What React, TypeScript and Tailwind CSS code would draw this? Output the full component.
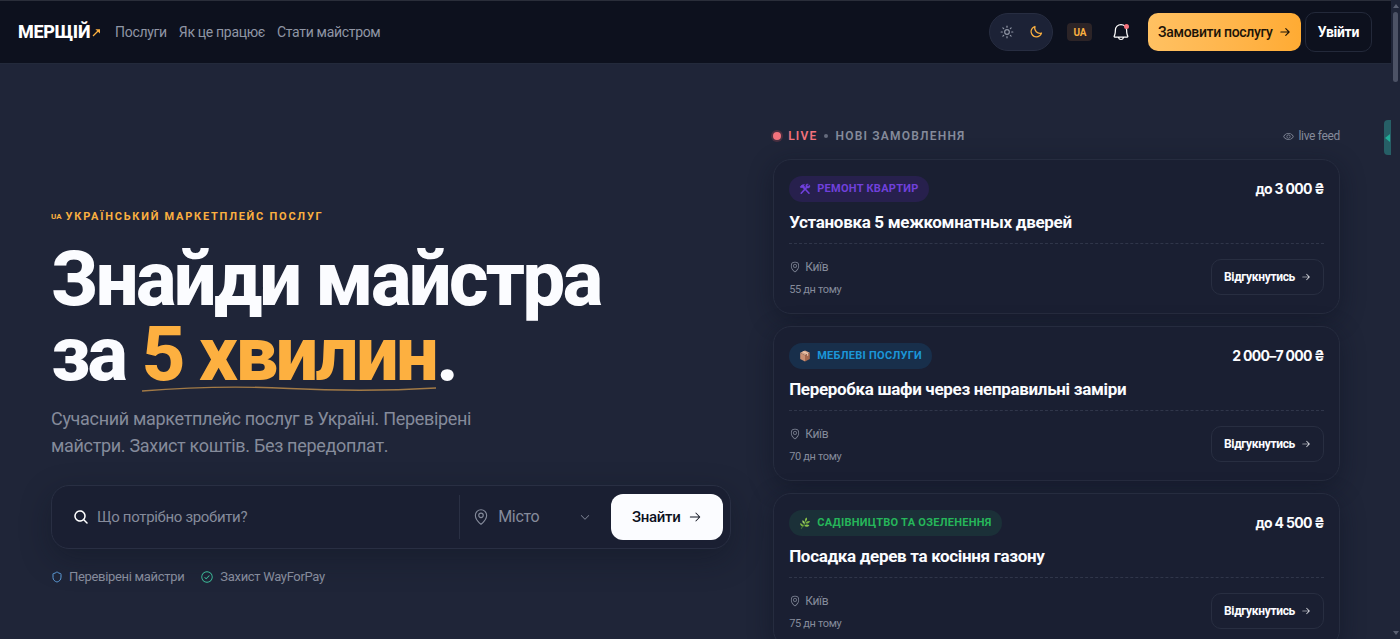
import { useState } from "react";
import type { ReactNode } from "react";
import { Shield, Sun } from "lucide-react";
import {
  PiArrowRight,
  PiArrowRightBold,
  PiBell,
  PiCaretDown,
  PiCheckCircle,
  PiEye,
  PiMagnifyingGlassBold,
  PiMapPin,
  PiMoonBold,
} from "react-icons/pi";

interface Order {
  id: number;
  category: string;
  icon: ReactNode;
  chip: string;
  price: string;
  title: string;
  city: string;
  time: string;
}

function ToolsIcon() {
  return (
    <svg viewBox="0 0 12 12" className="size-3 shrink-0" fill="none" stroke="currentColor" aria-hidden="true">
      <path d="M2.2 10.2 7.6 4.4" strokeWidth="1.6" strokeLinecap="round" />
      <path d="M10.6 2.2 9 3.6 7.9 2.6 9.3 1.1A2 2 0 1 0 10.6 2.2Z" fill="currentColor" strokeWidth="0.6" />
      <path d="M5.4 5.2 10 10.2" strokeWidth="1.6" strokeLinecap="round" />
      <path d="M1.2 3.9C2.2 2.3 3.6 1.5 5.6 1.6L4.8 2.5 5.8 4.2 4.4 5.5 3 4.2 2 4.9Z" fill="currentColor" strokeWidth="0.6" />
    </svg>
  );
}

function BoxIcon() {
  return (
    <svg viewBox="0 0 12 12" className="size-3 shrink-0" aria-hidden="true">
      <path d="M6 .6 10.8 2.8 6 5.2 1.2 2.8Z" fill="#d9a78a" />
      <path d="M1.2 2.8 6 5.2V11.6L1.2 9.1Z" fill="#c98f72" />
      <path d="M10.8 2.8 6 5.2V11.6L10.8 9.1Z" fill="#a5694f" />
      <path d="M3.2 1.9 8.2 4.1V6L9.2 5.5V3.6L4.4 1.3Z" fill="#efcdb5" />
    </svg>
  );
}

function HerbIcon() {
  return (
    <svg viewBox="0 0 12 12" className="size-3 shrink-0" aria-hidden="true">
      <path d="M2.2 11.4C4.6 9.6 6 6.6 6.8 2.6" fill="none" stroke="#5c9e31" strokeWidth="0.9" strokeLinecap="round" />
      <path d="M6.6 4.4C5.6 3 6 1.5 7.6.5 8.4 2 8.1 3.4 6.6 4.4Z" fill="#8bc34a" />
      <path d="M6.6 6.4C7.2 4.5 8.9 3.8 11 4.2 10.3 6.1 8.7 6.9 6.6 6.4Z" fill="#7cb342" />
      <path d="M5.3 9C6.3 7.5 8.4 7.1 10.4 8.2 9.1 9.9 7.2 10.3 5.3 9Z" fill="#8bc34a" />
      <path d="M5.6 6.8C3.9 6.6 3.1 5.2 3.4 3.2 5.2 3.8 6 5 5.6 6.8Z" fill="#9ccc65" />
      <path d="M4.1 9.3C2.3 9.4 1.1 8.2 1 6.2 2.9 6.4 4.1 7.4 4.1 9.3Z" fill="#7cb342" />
    </svg>
  );
}

const ORDERS: Order[] = [
  {
    id: 1,
    category: "Ремонт квартир",
    icon: <ToolsIcon />,
    chip: "bg-[#27204d] text-[#7040dc]",
    price: "до 3 000 ₴",
    title: "Установка 5 межкомнатных дверей",
    city: "Київ",
    time: "55 дн тому",
  },
  {
    id: 2,
    category: "Меблеві послуги",
    icon: <BoxIcon />,
    chip: "bg-[#182f4b] text-[#1b96d8]",
    price: "2 000–7 000 ₴",
    title: "Переробка шафи через неправильні заміри",
    city: "Київ",
    time: "70 дн тому",
  },
  {
    id: 3,
    category: "Садівництво та озеленення",
    icon: <HerbIcon />,
    chip: "bg-[#1b3038] text-[#26b65a]",
    price: "до 4 500 ₴",
    title: "Посадка дерев та косіння газону",
    city: "Київ",
    time: "75 дн тому",
  },
];

const NAV = ["Послуги", "Як це працює", "Стати майстром"];

function Header() {
  const [dark, setDark] = useState(true);

  return (
    <header className="flex h-16 shrink-0 items-center justify-between border-t border-b border-t-[#2a2e3a] border-b-[#232a3b] bg-[#0d111e] pr-[19px] pl-[18px]">
      <div className="flex items-center gap-3.5">
        <a href="#" className="flex items-center gap-0.5 text-lg font-extrabold text-white">
          МЕРЩІЙ
          <svg viewBox="0 0 9 9" className="size-[9px]" aria-hidden="true">
            <path d="M1 8 6 3" stroke="#fbb040" strokeWidth="1.3" />
            <path d="M3.4 1.2H8V5.6Z" fill="#fbb040" />
          </svg>
        </a>
        <nav className="flex gap-3">
          {NAV.map((item) => (
            <a key={item} href="#" className="text-sm text-[#9096a5]">
              {item}
            </a>
          ))}
        </nav>
      </div>

      <div className="flex items-center">
        <div className="flex h-[38px] w-16 items-center justify-around rounded-full border border-[#272d41] bg-[#1c2236] px-0.5">
          <button type="button" aria-label="Світла тема" aria-pressed={!dark} onClick={() => setDark(false)}>
            <Sun className="size-3.5 text-[#9096a5]" strokeWidth={2} />
          </button>
          <button type="button" aria-label="Темна тема" aria-pressed={dark} onClick={() => setDark(true)}>
            <PiMoonBold className="size-3.5 text-[#fbb040]" />
          </button>
        </div>
        <button type="button" className="ml-3.5 h-[18px] rounded-sm bg-[#2c2427] px-1.5 text-[10px] font-bold text-[#fbb040]">
          UA
        </button>
        <button type="button" aria-label="Сповіщення" className="relative ml-[19px] text-white">
          <PiBell className="size-5" />
          <span className="absolute top-0.5 right-0.5 size-[5px] rounded-full bg-[#f4727c]" />
        </button>
        <button
          type="button"
          className="ml-[17px] flex h-[38px] items-center gap-1.5 rounded-[10px] bg-linear-to-r from-[#ffc162] to-[#ffab33] px-2.5 text-sm font-medium text-[#1c1408]"
        >
          Замовити послугу
          <PiArrowRightBold className="size-3" />
        </button>
        <button
          type="button"
          className="ml-1 h-10 rounded-[10px] border border-[#23293a] px-3 text-sm font-bold text-white"
        >
          Увійти
        </button>
      </div>
    </header>
  );
}

function SearchForm() {
  return (
    <form
      className="flex h-16 items-center rounded-[18px] border border-[#292f43] bg-[#1a1f32] pr-[7px] pl-[21px] shadow-[0_10px_30px_rgba(12,16,30,0.35)]"
      onSubmit={(e) => e.preventDefault()}
    >
      <PiMagnifyingGlassBold className="size-4 shrink-0 text-white" />
      <input
        type="text"
        aria-label="Що потрібно зробити?"
        placeholder="Що потрібно зробити?"
        className="ml-2 min-w-0 flex-1 bg-transparent text-[15px] text-white outline-none placeholder:text-[#858b9b]"
      />
      <div className="relative flex h-11 w-[152px] items-center border-l border-[#2a3044]">
        <PiMapPin className="absolute left-3 size-[18px] text-[#858b9b]" />
        <select
          aria-label="Місто"
          className="h-full w-full appearance-none bg-transparent pl-[38px] text-base text-[#858b9b] outline-none"
        >
          <option>Місто</option>
          <option>Київ</option>
          <option>Львів</option>
        </select>
        <PiCaretDown className="pointer-events-none absolute right-5 size-3 text-[#858b9b]" />
      </div>
      <button
        type="submit"
        className="flex h-[46px] w-28 items-center justify-center gap-2 rounded-xl bg-[#fbfcff] text-[15px] font-medium text-[#0d111e]"
      >
        Знайти
        <PiArrowRight className="size-3.5" />
      </button>
    </form>
  );
}

function Hero() {
  return (
    <section className="pt-[145px]">
      <p className="flex items-center gap-1 text-[11px] leading-4 font-bold tracking-[0.16em] text-[#fbb040] uppercase">
        <span className="text-[8px] tracking-normal">UA</span>
        Український маркетплейс послуг
      </p>
      <h1 className="mt-[17px] text-[76px] leading-[75px] font-extrabold tracking-[-0.035em] text-[#fbfcff]">
        Знайди майстра
        <br />
        за{" "}
        <span className="relative inline-block text-[#fdb040]">
          5 хвилин
          <svg
            viewBox="0 0 300 8"
            preserveAspectRatio="none"
            className="absolute -bottom-px left-0 h-2 w-full"
            fill="none"
            aria-hidden="true"
          >
            <path d="M0 6C50 2 100 1 150 3.5S250 6 300 3" stroke="#a27a46" strokeWidth="1.4" />
          </svg>
        </span>
        .
      </h1>
      <p className="mt-[13px] max-w-[460px] text-lg leading-[27px] text-[#858b9b]">
        Сучасний маркетплейс послуг в Україні. Перевірені майстри. Захист коштів. Без передоплат.
      </p>
      <div className="mt-[26px]">
        <SearchForm />
      </div>
      <ul className="mt-5 flex gap-4 text-[13px] leading-4 text-[#858b9b]">
        <li className="flex items-center gap-1.5">
          <Shield className="size-3 text-[#5b9bd8]" />
          Перевірені майстри
        </li>
        <li className="flex items-center gap-1.5">
          <PiCheckCircle className="size-3.5 text-[#3fc7a0]" />
          Захист WayForPay
        </li>
      </ul>
    </section>
  );
}

function OrderCard({ order }: { order: Order }) {
  return (
    <article className="h-[155px] rounded-[18px] border border-[#262c3f] bg-[#1a1f32] px-[15px] pt-4 shadow-[0_6px_24px_rgba(12,16,30,0.45)]">
      <div className="flex items-center justify-between">
        <span
          className={`flex h-[26px] items-center gap-1.5 rounded-full px-2.5 text-[11px] font-bold tracking-wide uppercase ${order.chip}`}
        >
          {order.icon}
          {order.category}
        </span>
        <span className="font-['Inter','Noto_Sans',sans-serif] text-sm font-bold tracking-tighter text-[#fbfcff]">
          {order.price}
        </span>
      </div>
      <h2 className="mt-2 text-[17px] leading-6 font-bold text-[#fbfcff]">{order.title}</h2>
      <div className="mt-[9px] flex items-start justify-between border-t border-dashed border-[#30364a] pt-[15px]">
        <div className="flex flex-col gap-[7px] text-[#858b9b]">
          <span className="flex items-center gap-1 text-xs leading-4">
            <PiMapPin className="size-3" />
            {order.city}
          </span>
          <span className="text-[11px] leading-4">{order.time}</span>
        </div>
        <button
          type="button"
          className="flex h-9 items-center gap-1.5 rounded-[10px] border border-[#282e41] px-3 text-xs font-bold text-[#fbfcff]"
        >
          Відгукнутись
          <PiArrowRight className="size-2.5" />
        </button>
      </div>
    </article>
  );
}

function LiveFeed() {
  return (
    <section className="pt-16">
      <div className="flex h-4 items-center justify-between">
        <div className="flex items-center gap-[7px] text-xs font-semibold tracking-widest uppercase">
          <span className="size-2 rounded-full bg-[#f4727c] ring-2 ring-[#4a2f40]" />
          <span className="text-[#f4727c]">Live</span>
          <span className="size-1 rounded-full bg-[#656b7c]" />
          <h2 className="text-[#858b9b]">Нові замовлення</h2>
        </div>
        <span className="flex items-center gap-1 text-xs text-[#858b9b]">
          <PiEye className="size-[11px]" />
          live feed
        </span>
      </div>
      <div className="mt-[15px] flex flex-col gap-3">
        {ORDERS.map((order) => (
          <OrderCard key={order.id} order={order} />
        ))}
      </div>
    </section>
  );
}

export default function App() {
  return (
    <div className="flex h-screen overflow-hidden bg-[#1f2538] font-['Roboto','Noto_Sans',sans-serif] tracking-[-0.02em]">
      <div className="relative flex min-w-0 flex-1 flex-col">
        <Header />
        <main className="grid grid-cols-[6fr_5fr] gap-[42px] px-[51px]">
          <Hero />
          <LiveFeed />
        </main>
        {/* side panel handle */}
        <button
          type="button"
          aria-label="Відкрити панель"
          className="absolute top-[120px] right-0 flex h-[35px] w-[7px] items-center justify-center rounded-l-sm bg-[#265f66]"
        >
          <svg viewBox="0 0 5 8" className="h-2 w-[5px]" aria-hidden="true">
            <path d="M5 0V8L0 4Z" fill="#21ad98" />
          </svg>
        </button>
      </div>
      {/* scroll track */}
      <div className="flex w-[9px] shrink-0 flex-col items-center justify-between bg-[#1f2538] py-1" aria-hidden="true">
        <div className="flex flex-col items-center gap-1">
          <svg viewBox="0 0 6 4" className="h-1 w-1.5">
            <path d="M3 0 6 4H0Z" fill="#5a6072" />
          </svg>
          <div className="h-[70px] w-[5px] rounded-full bg-[#4c5265]" />
        </div>
        <svg viewBox="0 0 6 4" className="h-1 w-1.5">
          <path d="M3 4 6 0H0Z" fill="#5a6072" />
        </svg>
      </div>
    </div>
  );
}
